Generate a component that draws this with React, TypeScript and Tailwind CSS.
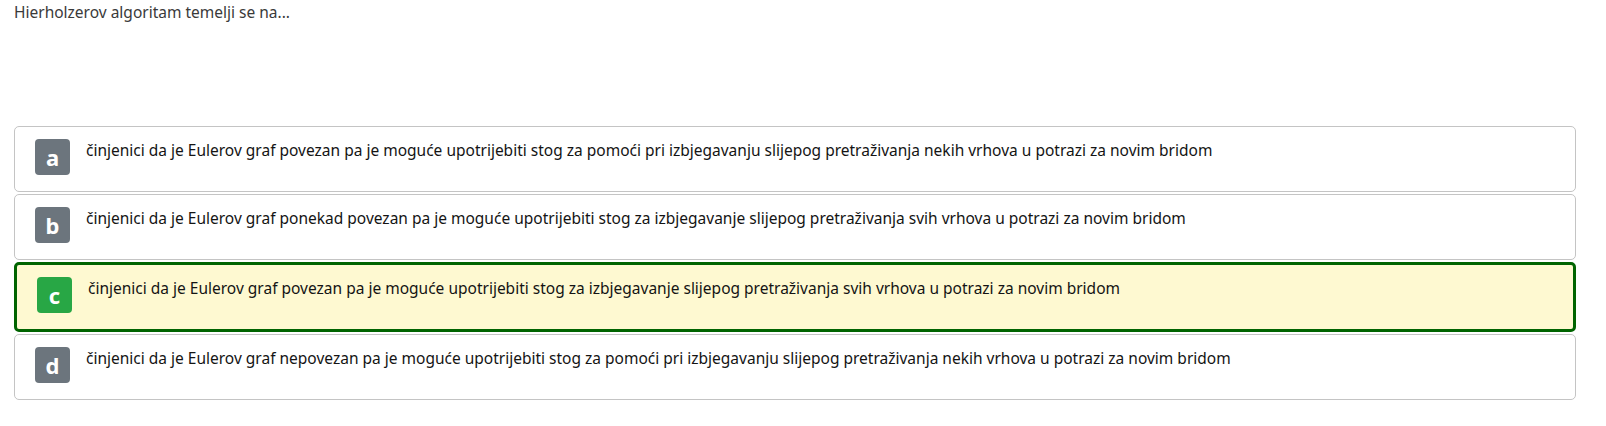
const answers = [
  {
    letter: "a",
    text: "činjenici da je Eulerov graf povezan pa je moguće upotrijebiti stog za pomoći pri izbjegavanju slijepog pretraživanja nekih vrhova u potrazi za novim bridom",
  },
  {
    letter: "b",
    text: "činjenici da je Eulerov graf ponekad povezan pa je moguće upotrijebiti stog za izbjegavanje slijepog pretraživanja svih vrhova u potrazi za novim bridom",
  },
  {
    letter: "c",
    text: "činjenici da je Eulerov graf povezan pa je moguće upotrijebiti stog za izbjegavanje slijepog pretraživanja svih vrhova u potrazi za novim bridom",
    selected: true,
  },
  {
    letter: "d",
    text: "činjenici da je Eulerov graf nepovezan pa je moguće upotrijebiti stog za pomoći pri izbjegavanju slijepog pretraživanja nekih vrhova u potrazi za novim bridom",
  },
];

function Answer({ letter, text, selected }: { letter: string; text: string; selected?: boolean }) {
  return (
    <div
      className={
        selected
          ? "flex items-start gap-[16px] rounded-[5px] border-[3px] border-[#006400] bg-[#fef9d1] pl-[20px] pr-4 pt-[12px] pb-[16px]"
          : "flex items-start gap-[16px] rounded-[5px] border border-[#c4c4c4] bg-white pl-[20px] pr-4 pt-[12px] pb-[16px]"
      }
    >
      <span
        className={
          selected
            ? "flex h-[36px] w-[35px] shrink-0 items-center justify-center rounded-[4px] bg-[#28a745] text-[22px] font-bold leading-none text-white"
            : "flex h-[36px] w-[35px] shrink-0 items-center justify-center rounded-[4px] bg-[#6c757d] text-[22px] font-bold leading-none text-white"
        }
      >
        {letter}
      </span>
      <p className="-mt-[1px] text-[15.5px] leading-[24px] text-[#141414]">{text}</p>
    </div>
  );
}

export default function App() {
  return (
    <div className="bg-white pl-[14px] pr-[30px] pb-[26px]" style={{ fontFamily: '"Noto Sans", sans-serif' }}>
      <p className="text-[15.5px] leading-[24px] text-[#3a3a3a]">Hierholzerov algoritam temelji se na...</p>
      <div className="mt-[102px] flex flex-col gap-[2px]">
        {answers.map((a) => (
          <Answer key={a.letter} {...a} />
        ))}
      </div>
    </div>
  );
}
